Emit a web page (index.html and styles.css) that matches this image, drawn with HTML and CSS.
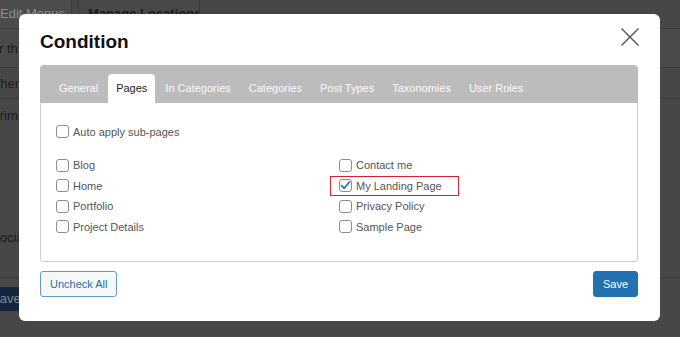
FILE: index.html
```html
<!DOCTYPE html>
<html>
<head>
<meta charset="utf-8">
<title>Condition</title>
<link rel="stylesheet" href="styles.css">
</head>
<body>
<div class="admin">
  <div class="admin-tabs">
    <div class="admin-tab">Edit Menus</div>
    <div class="admin-tab admin-tab-active">Manage Locations</div>
  </div>
  <div class="admin-row admin-row-1"><span class="shift-you">Your th</span></div>
  <div class="admin-row admin-row-2"><span class="shift-w">When</span></div>
  <div class="admin-row admin-row-3">
    <div class="admin-label shift-p">Prima</div>
    <div class="admin-label admin-label-low shift-s">Socia</div>
  </div>
  <div class="admin-foot"><span class="admin-save">Save</span></div>
</div>

<div class="modal">
  <div class="modal-head">
    <h2 class="modal-title">Condition</h2>
    <svg class="modal-close" viewBox="0 0 18 18" aria-label="Close">
      <path d="M1 1 L17 17 M17 1 L1 17" stroke="#555" stroke-width="1.4" fill="none" stroke-linecap="square"/>
    </svg>
  </div>

  <div class="tabs">
    <div class="tabs-nav">
      <span class="tab">General</span>
      <span class="tab tab-active">Pages</span>
      <span class="tab">In Categories</span>
      <span class="tab">Categories</span>
      <span class="tab">Post Types</span>
      <span class="tab">Taxonomies</span>
      <span class="tab">User Roles</span>
    </div>
    <div class="tabs-body">
      <label class="check"><span class="cb"></span>Auto apply sub-pages</label>
      <div class="check-grid">
        <div class="check-col">
          <label class="check"><span class="cb"></span>Blog</label>
          <label class="check"><span class="cb"></span>Home</label>
          <label class="check"><span class="cb"></span>Portfolio</label>
          <label class="check"><span class="cb"></span>Project Details</label>
        </div>
        <div class="check-col">
          <label class="check"><span class="cb"></span>Contact me</label>
          <label class="check check-marked"><span class="cb"><svg viewBox="0 0 11 11"><path d="M1.6 5.6 L4.2 8.3 L9.4 2" stroke="#2a74c6" stroke-width="1.8" fill="none" stroke-linecap="round" stroke-linejoin="round"/></svg></span>My Landing Page<span class="highlight"></span></label>
          <label class="check"><span class="cb"></span>Privacy Policy</label>
          <label class="check"><span class="cb"></span>Sample Page</label>
        </div>
      </div>
    </div>
  </div>

  <div class="modal-foot">
    <button class="btn btn-secondary">Uncheck All</button>
    <button class="btn btn-primary">Save</button>
  </div>
</div>
</body>
</html>
```

FILE: styles.css
```css
* { box-sizing: border-box; }
html, body { margin: 0; padding: 0; }
body {
  width: 680px;
  height: 337px;
  overflow: hidden;
  position: relative;
  background: #474747;
  font-family: "Liberation Sans", Arial, Helvetica, sans-serif;
}

/* dimmed admin page behind the overlay */
.admin { color: #1b1b1b; font-size: 13px; }
.admin-tabs {
  display: flex;
  height: 29px;
  border-bottom: 1px solid #3e3e3e;
}
.admin-tab {
  width: 72px;
  height: 28px;
  padding-top: 6px;
  line-height: 16px;
  background: #4c4c4c;
  border-right: 1px solid #3b3b3b;
  color: #8e8e8e;
  white-space: nowrap;
  overflow: hidden;
}
.admin-tab-active {
  margin-left: 6px;
  width: 122px;
  padding-left: 9px;
  background: #484848;
  border-left: 1px solid #3b3b3b;
  color: #1b1b1b;
  font-weight: bold;
}
.admin-row {
  border-bottom: 1px solid #3e3e3e;
  white-space: nowrap;
  overflow: hidden;
}
.admin-row-1 { height: 39px; display: flex; align-items: center; background: #4a4a4a; }
.admin-row-2 { height: 31px; display: flex; align-items: center; }
.admin-row-3 { height: 179px; padding-top: 8px; }
.admin-label { line-height: 18px; }
.admin-label-low { margin-top: 104px; }
.shift-you { margin-left: -23px; }
.shift-w { margin-left: -12px; }
.shift-p { margin-left: -9px; }
.shift-s { margin-left: -9px; }
.admin-foot { padding-top: 9px; white-space: nowrap; }
.admin-save {
  display: inline-block;
  height: 24px;
  line-height: 24px;
  padding: 0 10px;
  margin-left: -19px;
  background: #13263b;
  color: #7d8895;
  border-radius: 3px;
}

/* modal */
.modal {
  position: absolute;
  left: 19px;
  top: 14px;
  width: 641px;
  height: 307px;
  background: #fff;
  border-radius: 6px;
  padding: 16px 22px 24px 21px;
  display: flex;
  flex-direction: column;
}
.modal-head {
  display: flex;
  justify-content: space-between;
  align-items: flex-start;
  height: 24px;
}
.modal-title {
  margin: 0;
  font-size: 19px;
  line-height: 24px;
  font-weight: bold;
  color: #111;
}
.modal-close {
  width: 18px;
  height: 18px;
  margin-top: -2px;
  margin-right: -1px;
}

.tabs { margin-top: 11px; }
.tabs-nav {
  display: flex;
  gap: 2px;
  height: 38px;
  padding: 9px 0 0 11px;
  background: #bcbcbc;
  border-radius: 4px 4px 0 0;
}
.tab {
  height: 29px;
  line-height: 29px;
  padding: 0 8px;
  font-size: 11px;
  color: #fbfbfb;
  white-space: nowrap;
}
.tab-active {
  background: #fff;
  color: #1d1d1d;
  border-radius: 4px 4px 0 0;
}
.tabs-body {
  height: 159px;
  border: 1px solid #cdcdcd;
  border-top: 0;
  border-radius: 0 0 4px 4px;
  padding: 18.5px 15px 0;
}
.check-grid {
  display: grid;
  grid-template-columns: 1fr 1fr;
  margin-top: 13px;
}
.check-col { display: flex; flex-direction: column; }
.check {
  position: relative;
  display: flex;
  align-items: center;
  gap: 4px;
  height: 20.5px;
  font-size: 11px;
  color: #555;
  white-space: nowrap;
}
.cb {
  width: 13px;
  height: 13px;
  flex: none;
  border: 1px solid #8e8e8e;
  border-radius: 3px;
  background: #fff;
  display: flex;
  align-items: center;
  justify-content: center;
}
.cb svg { width: 11px; height: 11px; display: block; }
.highlight {
  position: absolute;
  left: -9px;
  top: 0.5px;
  width: 129px;
  height: 20px;
  border: 1px solid #e01d30;
}

.modal-foot {
  display: flex;
  justify-content: space-between;
  margin-top: 9px;
}
.btn {
  height: 26px;
  padding: 0 9px;
  font-family: inherit;
  font-size: 11px;
  border-radius: 3px;
  line-height: 24px;
}
.btn-secondary {
  background: #f6f7f7;
  color: #2271b1;
  border: 1px solid #5f98cf;
}
.btn-primary {
  background: #2271b1;
  color: #fff;
  border: 1px solid #2271b1;
}
```
